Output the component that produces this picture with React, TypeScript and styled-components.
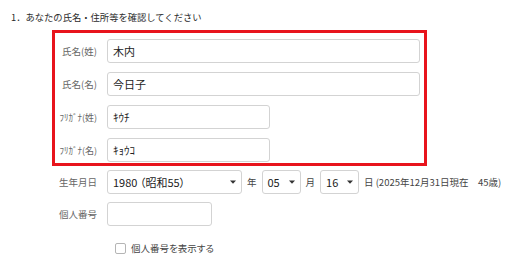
import * as React from "react";
import styled, { createGlobalStyle } from "styled-components";

const GlobalStyle = createGlobalStyle`
  html, body {
    margin: 0;
    padding: 0;
    background: #ffffff;
  }
  body {
    font-family: "Noto Sans CJK JP", "Noto Sans", sans-serif;
    font-feature-settings: "palt";
    color: #333333;
  }
`;

const Page = styled.div`
  width: 512px;
  height: 256px;
  box-sizing: border-box;
  padding-top: 10px;
  overflow: hidden;
`;

const SectionTitle = styled.div`
  padding-left: 11px;
  font-size: 9.3px;
  font-feature-settings: normal;
  line-height: 15px;
  color: #2b2b2b;
`;

const Highlight = styled.div`
  margin: 5px 0 0 52px;
  width: 375px;
  box-sizing: border-box;
  border: 3px solid #e8141c;
  padding: 6px 4px 1px 0;
  display: grid;
  grid-template-columns: 42px 1fr;
  column-gap: 10px;
  row-gap: 9px;
  align-items: center;
`;

const Outside = styled.div`
  margin: 4px 0 0 55px;
  display: grid;
  grid-template-columns: 42px 1fr;
  column-gap: 10px;
  row-gap: 8px;
  align-items: center;
`;

const Label = styled.div<{ $kana?: boolean }>`
  text-align: right;
  font-size: ${(p) => (p.$kana ? "9px" : "9.5px")};
  color: #666666;
  white-space: nowrap;
`;

const TextInput = styled.input<{ $w?: number }>`
  box-sizing: border-box;
  width: ${(p) => (p.$w ? `${p.$w}px` : "100%")};
  height: 24px;
  border: 1px solid #d3d3d3;
  border-radius: 3px;
  padding: 0 5px;
  font-family: inherit;
  font-feature-settings: "palt";
  font-size: 11px;
  color: #222222;
  outline: none;
  background: #ffffff;
`;

const BirthRow = styled.div`
  display: flex;
  align-items: center;
  gap: 5px;
`;

const SelectBox = styled.div<{ $w: number }>`
  box-sizing: border-box;
  width: ${(p) => p.$w}px;
  height: 24px;
  border: 1px solid #d3d3d3;
  border-radius: 3px;
  padding: 0 5px;
  display: flex;
  align-items: center;
  justify-content: space-between;
  font-size: 11px;
  color: #222222;
`;

const Caret = () => (
  <svg width="6" height="4" viewBox="0 0 6 4">
    <path d="M0 0.5 L6 0.5 L3 3.8 Z" fill="#333" />
  </svg>
);

const Unit = styled.span`
  font-size: 9.5px;
  color: #444444;
`;

const Note = styled.span`
  font-size: 9.5px;
  color: #444444;
  white-space: nowrap;
`;

const CheckRow = styled.label`
  display: flex;
  align-items: center;
  gap: 5px;
  margin: 15px 0 0 115px;
  font-size: 9.5px;
  color: #444444;
`;

const CheckBox = styled.span`
  width: 11px;
  height: 11px;
  box-sizing: border-box;
  border: 1px solid #b5b5b5;
  border-radius: 2px;
  background: #ffffff;
`;

const Select = (props: { width: number; value: string }) => (
  <SelectBox $w={props.width}>
    <span>{props.value}</span>
    <Caret />
  </SelectBox>
);

export default function App() {
  return (
    <>
      <GlobalStyle />
      <Page>
        <SectionTitle>1．あなたの氏名・住所等を確認してください</SectionTitle>
        <Highlight>
          <Label>氏名(姓)</Label>
          <TextInput readOnly value="木内" />
          <Label>氏名(名)</Label>
          <TextInput readOnly value="今日子" />
          <Label $kana>ﾌﾘｶﾞﾅ(姓)</Label>
          <TextInput readOnly value="ｷｳﾁ" $w={163} />
          <Label $kana>ﾌﾘｶﾞﾅ(名)</Label>
          <TextInput readOnly value="ｷｮｳｺ" $w={163} />
        </Highlight>
        <Outside>
          <Label>生年月日</Label>
          <BirthRow>
            <Select width={135} value="1980 （昭和55）" />
            <Unit>年</Unit>
            <Select width={39} value="05" />
            <Unit>月</Unit>
            <Select width={39} value="16" />
            <Note>日 (2025年12月31日現在　45歳)</Note>
          </BirthRow>
          <Label>個人番号</Label>
          <TextInput readOnly value="" $w={105} />
        </Outside>
        <CheckRow>
          <CheckBox />
          個人番号を表示する
        </CheckRow>
      </Page>
    </>
  );
}
